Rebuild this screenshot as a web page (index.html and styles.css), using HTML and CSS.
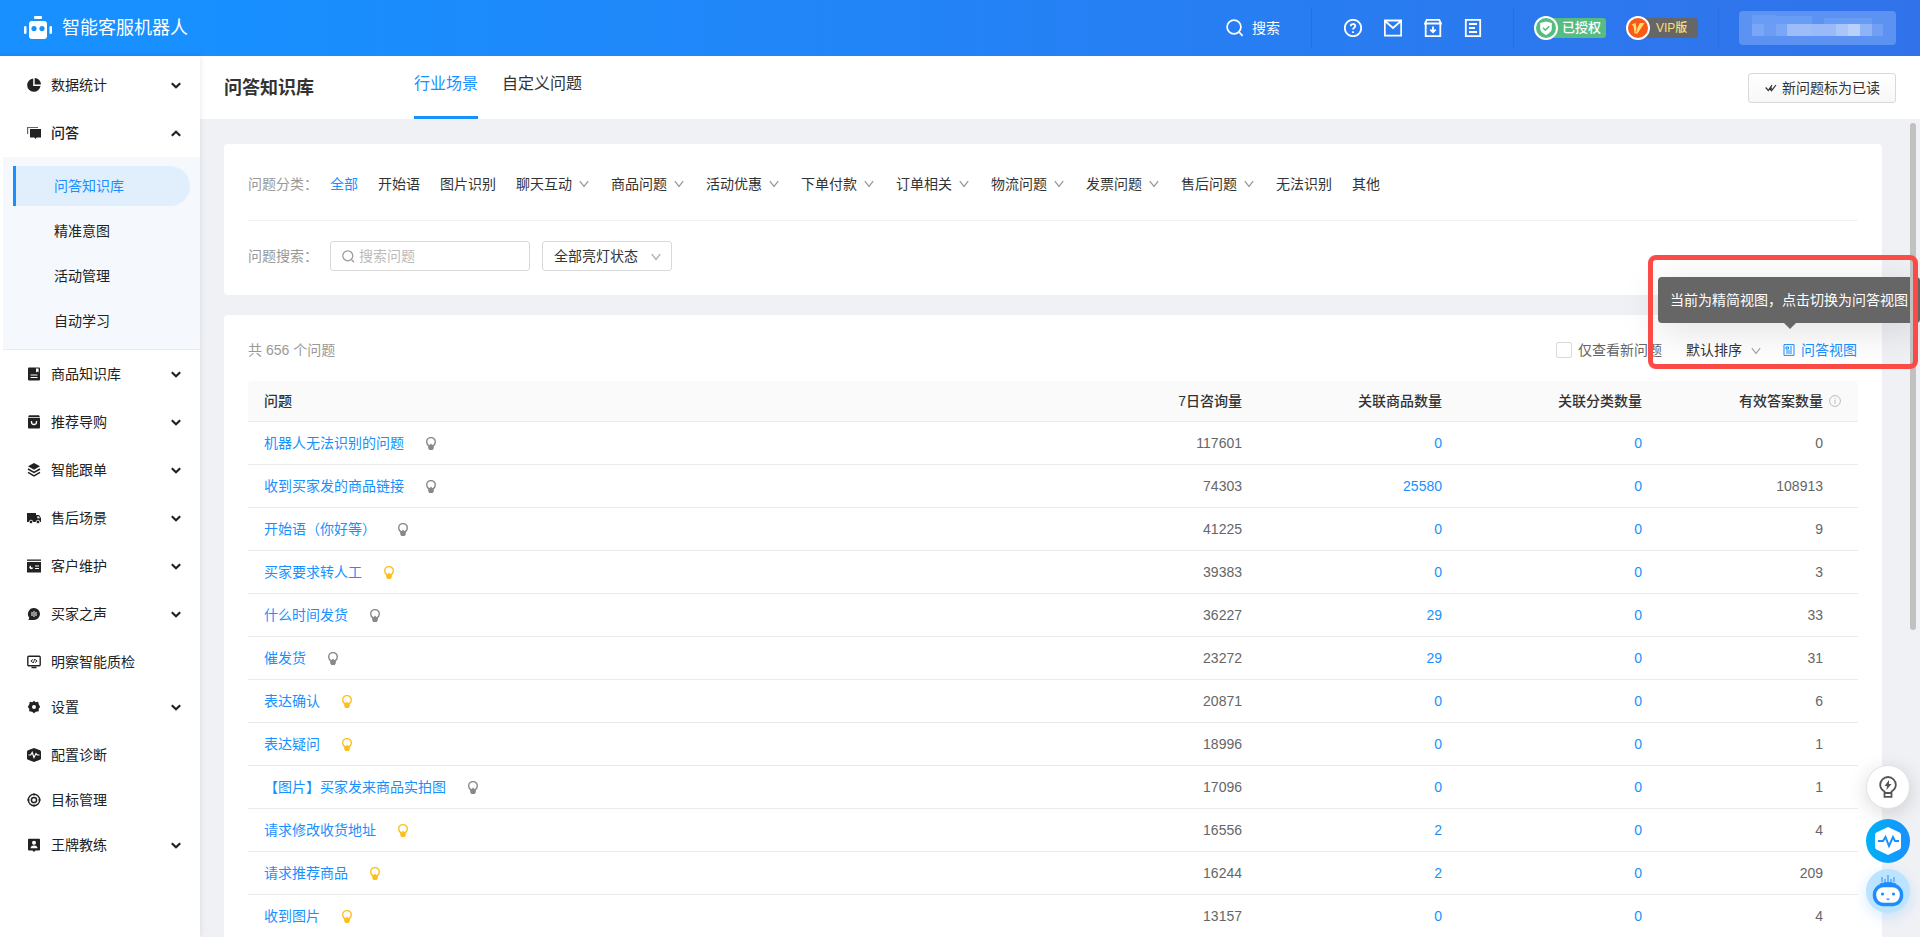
FILE: index.html
```html
<!DOCTYPE html>
<html lang="zh-CN">
<head>
<meta charset="utf-8">
<title>问答知识库</title>
<link rel="stylesheet" href="styles.css">
</head>
<body>
<svg class="sprite" aria-hidden="true">
  <symbol id="caret" viewBox="0 0 10 7"><path d="M0.8 1.2 5 5.2 9.2 1.2" fill="none" stroke="currentColor" stroke-width="2.2"/></symbol>
  <symbol id="down" viewBox="0 0 10 8"><path d="M0.8 1.2 5 6.4 9.2 1.2" fill="none" stroke="currentColor" stroke-width="1.3"/></symbol>
  <symbol id="search" viewBox="0 0 18 18"><circle cx="8" cy="8" r="6.9" fill="none" stroke="currentColor" stroke-width="1.7"/><path d="m13 13 3.6 3.9" stroke="currentColor" stroke-width="1.8"/></symbol>
  <symbol id="bulb" viewBox="0 0 10 13"><path d="M3.100 8.800C1.500 7.800.7 6.500.7 4.900a4.300 4.300 0 0 1 8.600 0c0 1.600-.8 2.900-2.400 3.900" fill="none" stroke="currentColor" stroke-width="1.400"/><path d="M2.200 8h1.600L5 6.400 6.200 8h1.600v3.200L6.700 13H3.300l-1.100-1.800z" fill="currentColor"/></symbol>
</svg>

<header class="topbar">
  <a class="brand" href="#">
    <svg width="28" height="24" viewBox="0 0 28 24"><g fill="#fff"><rect x="10" y="0" width="8" height="3" rx="1"/><rect x="5" y="5" width="18" height="18" rx="3"/><rect x="0" y="10" width="2.500" height="8" rx="1.200"/><rect x="25.500" y="10" width="2.500" height="8" rx="1.200"/></g><circle cx="10" cy="12.600" r="2.600" fill="#1890ff"/><circle cx="18" cy="12.600" r="2.600" fill="#1890ff"/></svg>
    <span>智能客服机器人</span>
  </a>
  <button class="top-search" type="button"><svg width="18" height="18"><use href="#search"/></svg>搜索</button>
  <i class="sep"></i>
  <nav class="top-icons">
    <a href="#" aria-label="帮助"><svg viewBox="0 0 18 18"><circle cx="9" cy="9" r="8.200"/><path d="M6.700 7.300c0-3 4.600-3 4.600-.2 0 1.700-2.300 1.700-2.300 3.400M9 12.200v1.700"/></svg></a>
    <a href="#" aria-label="邮件"><svg viewBox="0 0 18 18"><path d="M.8 1.500h16.400v15.200H.8zM1 2l8 7 8-7"/></svg></a>
    <a href="#" aria-label="下载"><svg viewBox="0 0 18 18"><path d="M2.800.8h12.400L17 4.500H1zM1.700 4.500v12.700h14.600V4.500M9 7.500v5.500M6.300 10.700 9 13.300l2.700-2.600"/></svg></a>
    <a href="#" aria-label="文档"><svg viewBox="0 0 18 18"><path d="M1.800.8h14.400v16.400H1.800zM5 5h8M5 9h6M5 13h8"/></svg></a>
  </nav>
  <i class="sep"></i>
  <a class="badge badge-green" href="#"><svg width="24" height="24" viewBox="0 0 24 24"><circle cx="12" cy="12" r="11" fill="#55bd82" stroke="#fff" stroke-width="2"/><path d="M12 5.500 17.800 7v5.500c0 3-2.800 5-5.800 6.500-3-1.500-5.800-3.500-5.800-6.500V7z" fill="#fff"/><path d="m9 11.800 2.300 2.300 4-3.900" fill="none" stroke="#55bd82" stroke-width="1.500"/></svg><span>已授权</span></a>
  <a class="badge badge-vip" href="#"><svg width="24" height="24" viewBox="0 0 24 24"><circle cx="12" cy="12" r="11" fill="#fb5a16" stroke="#fff" stroke-width="2"/><path d="m5.500 8.500 4-1.500 1.200 6L14 7h4.500l-7 10.500H8.500L7.500 10z" fill="#ffdc73"/><path d="m11.800 9.500-2 7" stroke="#fb5a16" stroke-width=".8"/></svg><span>VIP版</span></a>
  <i class="sep"></i>
  <div class="user">
    <svg viewBox="0 0 157 34" preserveAspectRatio="none"><rect width="157" height="34" rx="4" fill="#5c93f3"/><g fill="#699cf4"><rect x="13" y="4" width="24" height="9"/><rect x="37" y="5" width="36" height="8"/><rect x="85" y="7" width="48" height="6"/></g><rect x="13" y="13" width="131" height="12" fill="#8eb3f6"/><rect x="13" y="13" width="12" height="12" fill="#7ba6f6"/><rect x="25" y="13" width="12" height="12" fill="#6c9cf4"/><rect x="37" y="13" width="11" height="12" fill="#7ba6f6"/><rect x="48" y="13" width="24" height="12" fill="#9dbcf8"/><rect x="72" y="13" width="25" height="12" fill="#9ab9f8"/><rect x="97" y="13" width="12" height="12" fill="#aac6f9"/><rect x="109" y="13" width="12" height="12" fill="#b9d0fa"/><rect x="133" y="13" width="11" height="12" fill="#719ff4"/></svg>
  </div>
</header>

<div class="layout">
  <aside class="sidebar">
    <ul class="menu">
      <li><a href="#"><svg class="mi" viewBox="0 0 14 14"><path d="M6.200.5A6.700 6.700 0 1 0 13.500 8H6.200z"/><path d="M7.700 0A6.500 6.500 0 0 1 14 6.500H7.700z"/></svg>数据统计<svg class="car"><use href="#caret"/></svg></a></li>
      <li class="open"><a href="#"><svg class="mi" viewBox="0 0 14 14"><path d="M0 1h11v1H1.200v6H0z" opacity=".7"/><path d="M3 3h11v8.500H9.700L8.500 13l-1.200-1.500H3z"/></svg>问答<svg class="car up"><use href="#caret"/></svg></a>
        <ul class="sub">
          <li><a class="on" href="#">问答知识库</a></li>
          <li><a href="#">精准意图</a></li>
          <li><a href="#">活动管理</a></li>
          <li><a href="#">自动学习</a></li>
        </ul>
      </li>
      <li><a href="#"><svg class="mi" viewBox="0 0 14 14"><path fill-rule="evenodd" d="M2 .5h10q1 0 1 1v11q0 1-1 1H2q-1 0-1-1v-11q0-1 1-1zM9 1.500v4l1.300-1 1.300 1v-4zM3.500 7.500v1h7v-1zM3.500 10v1h7v-1z"/></svg>商品知识库<svg class="car"><use href="#caret"/></svg></a></li>
      <li><a href="#"><svg class="mi" viewBox="0 0 14 14"><path d="M2 .3h10l1 2H1z"/><path d="M1 3h12v9.500q0 1-1 1H2q-1 0-1-1z"/><path d="M4.500 6v1a2.500 2.500 0 0 0 5 0V6" fill="none" stroke="#fff" stroke-width="1.300"/></svg>推荐导购<svg class="car"><use href="#caret"/></svg></a></li>
      <li><a href="#"><svg class="mi" viewBox="0 0 14 14"><path d="m7 0 6 3.300-6 3.500-6-3.500z"/><path d="m1 6 6 3.300L13 6M1 9.300l6 3.500 6-3.500" fill="none" stroke="currentColor" stroke-width="1.500"/></svg>智能跟单<svg class="car"><use href="#caret"/></svg></a></li>
      <li><a href="#"><svg class="mi" viewBox="0 0 14 14"><path d="M0 2h9v2h3l2 3v4H0z"/><path d="M10.300 5.200h1.300L13 7.300h-2.700z" fill="#fff"/><circle cx="4" cy="11" r="1.800" stroke="#fff" stroke-width=".8"/><circle cx="11" cy="11" r="1.800" stroke="#fff" stroke-width=".8"/></svg>售后场景<svg class="car"><use href="#caret"/></svg></a></li>
      <li><a href="#"><svg class="mi" viewBox="0 0 14 14"><path d="M0 .5h14v1.300H0z"/><path d="M0 3h14v10.500H0z"/><circle cx="4.300" cy="8.300" r="1.900" fill="#fff"/><path d="M4.500 5.500v2.600h3" stroke="currentColor"/><path d="M8 7h4M8 9.500h4" stroke="#fff" stroke-width="1.200"/></svg>客户维护<svg class="car"><use href="#caret"/></svg></a></li>
      <li><a href="#"><svg class="mi" viewBox="0 0 14 14"><path d="M7 1a6 6 0 1 1 0 12H1.500l.8-2.200A6 6 0 0 1 7 1z"/><path d="M5 5v4M7 4v6M9 5v4" stroke="#fff"/></svg>买家之声<svg class="car"><use href="#caret"/></svg></a></li>
      <li class="tight"><a href="#"><svg class="mi" viewBox="0 0 14 14"><rect x=".8" y="1.200" width="12.400" height="9.600" rx="1" fill="none" stroke="currentColor" stroke-width="1.400"/><path d="M4.500 12.500h5" stroke="currentColor" stroke-width="1.500"/><path d="M6 4.300 3.900 6 6 7.700M8 4.300 10.100 6 8 7.700M7.700 4 6.300 8" fill="none" stroke="currentColor" stroke-width=".9"/></svg>明察智能质检</a></li>
      <li><a href="#"><svg class="mi" viewBox="0 0 14 14"><path fill-rule="evenodd" d="m7 .8 1.700 1.500 2.500-.5.500 2.500L13.200 7l-1.500 1.700.1 2.500-2.900.5L7 13.200l-1.900-1.500-2.900-.5.100-2.500L.8 7l1.500-2.700.5-2.500 2.500.5zM7 5a2 2 0 1 0 0 4 2 2 0 0 0 0-4z"/></svg>设置<svg class="car"><use href="#caret"/></svg></a></li>
      <li class="tight"><a href="#"><svg class="mi" viewBox="0 0 14 14"><path d="m7 0 6 2.300q1 .5 1 1.500v6.400q0 1-1 1.500L7 14l-6-2.300q-1-.5-1-1.500V3.800q0-1 1-1.500z"/><path d="M1.500 7h2.200l1.500-2.500L7 9.500l2-4L10.300 7h2.200" fill="none" stroke="#fff" stroke-width="1.200"/></svg>配置诊断</a></li>
      <li class="tight"><a href="#"><svg class="mi" viewBox="0 0 14 14"><g fill="none" stroke="currentColor"><circle cx="7" cy="7" r="5.700" stroke-width="1.400"/><circle cx="7" cy="7" r="2.600" stroke-width="1.500"/><path d="M7 0v3M7 11v3M0 7h3M11 7h3" stroke-width=".8"/></g></svg>目标管理</a></li>
      <li><a href="#"><svg class="mi" viewBox="0 0 14 14"><path d="M2 .8h10q1 0 1 1v9.700q0 1-1 1H8.500L7 14l-1.500-1.500H2q-1 0-1-1V1.800q0-1 1-1z"/><circle cx="7" cy="4.800" r="2" fill="#fff"/><path d="M3.500 10.300q0-2.500 3.500-2.800 3.500.3 3.500 2.800z" fill="#fff"/></svg>王牌教练<svg class="car"><use href="#caret"/></svg></a></li>
    </ul>
  </aside>

  <main class="main">
    <div class="pagehead">
      <h1>问答知识库</h1>
      <nav class="tabs"><a class="on" href="#">行业场景</a><a href="#">自定义问题</a></nav>
      <button class="mark" type="button"><svg width="12" height="8" viewBox="0 0 12 8"><path d="m.7 3.500 2.600 3L7 1.200M4.700 4.500l1.800 2.200L11 1M6.700 3.700l-.8 1.100" fill="none" stroke="currentColor" stroke-width="1.200"/></svg>新问题标为已读</button>
    </div>

    <div class="content">
      <section class="card">
        <div class="filters">
          <span class="label">问题分类：</span>
          <a class="on" href="#">全部</a>
          <a href="#">开始语</a>
          <a href="#">图片识别</a>
          <a href="#">聊天互动<svg><use href="#down"/></svg></a>
          <a href="#">商品问题<svg><use href="#down"/></svg></a>
          <a href="#">活动优惠<svg><use href="#down"/></svg></a>
          <a href="#">下单付款<svg><use href="#down"/></svg></a>
          <a href="#">订单相关<svg><use href="#down"/></svg></a>
          <a href="#">物流问题<svg><use href="#down"/></svg></a>
          <a href="#">发票问题<svg><use href="#down"/></svg></a>
          <a href="#">售后问题<svg><use href="#down"/></svg></a>
          <a href="#">无法识别</a>
          <a href="#">其他</a>
        </div>
        <div class="searchrow">
          <label class="label" for="q">问题搜索：</label>
          <div class="field"><svg width="13" height="13"><use href="#search"/></svg><input id="q" type="text" placeholder="搜索问题"></div>
          <div class="pick"><select aria-label="亮灯状态"><option>全部亮灯状态</option></select><svg><use href="#down"/></svg></div>
        </div>
      </section>

      <section class="card">
        <div class="toolbar">
          <span class="count">共 656 个问题</span>
          <label class="check"><input type="checkbox">仅查看新问题</label>
          <div class="pick plain"><select aria-label="排序"><option>默认排序</option></select><svg><use href="#down"/></svg></div>
          <div class="viewwrap">
            <button class="view" type="button"><svg width="12" height="12" viewBox="0 0 12 12"><path d="M1 .6h10v10.800H1zM3 3h2.500v2H3zM7 3h2M7 5h2M3 7h6M3 9h6" fill="none" stroke="currentColor"/></svg>问答视图</button>
            <div class="tip" role="tooltip">当前为精简视图，点击切换为问答视图</div>
            <div class="callout"></div>
          </div>
        </div>
        <table class="grid">
          <thead><tr><th>问题</th><th>7日咨询量</th><th>关联商品数量</th><th>关联分类数量</th><th>有效答案数量<svg class="info" viewBox="0 0 12 12"><circle cx="6" cy="6" r="5.400"/><path d="M6 5v4M6 3v1.200"/></svg></th></tr></thead>
          <tbody>
            <tr><td><a href="#">机器人无法识别的问题</a><svg class="lamp"><use href="#bulb"/></svg></td><td>117601</td><td><a href="#">0</a></td><td><a href="#">0</a></td><td>0</td></tr>
            <tr><td><a href="#">收到买家发的商品链接</a><svg class="lamp"><use href="#bulb"/></svg></td><td>74303</td><td><a href="#">25580</a></td><td><a href="#">0</a></td><td>108913</td></tr>
            <tr><td><a href="#">开始语（你好等）</a><svg class="lamp"><use href="#bulb"/></svg></td><td>41225</td><td><a href="#">0</a></td><td><a href="#">0</a></td><td>9</td></tr>
            <tr><td><a href="#">买家要求转人工</a><svg class="lamp lit"><use href="#bulb"/></svg></td><td>39383</td><td><a href="#">0</a></td><td><a href="#">0</a></td><td>3</td></tr>
            <tr><td><a href="#">什么时间发货</a><svg class="lamp"><use href="#bulb"/></svg></td><td>36227</td><td><a href="#">29</a></td><td><a href="#">0</a></td><td>33</td></tr>
            <tr><td><a href="#">催发货</a><svg class="lamp"><use href="#bulb"/></svg></td><td>23272</td><td><a href="#">29</a></td><td><a href="#">0</a></td><td>31</td></tr>
            <tr><td><a href="#">表达确认</a><svg class="lamp lit"><use href="#bulb"/></svg></td><td>20871</td><td><a href="#">0</a></td><td><a href="#">0</a></td><td>6</td></tr>
            <tr><td><a href="#">表达疑问</a><svg class="lamp lit"><use href="#bulb"/></svg></td><td>18996</td><td><a href="#">0</a></td><td><a href="#">0</a></td><td>1</td></tr>
            <tr><td><a href="#">【图片】买家发来商品实拍图</a><svg class="lamp"><use href="#bulb"/></svg></td><td>17096</td><td><a href="#">0</a></td><td><a href="#">0</a></td><td>1</td></tr>
            <tr><td><a href="#">请求修改收货地址</a><svg class="lamp lit"><use href="#bulb"/></svg></td><td>16556</td><td><a href="#">2</a></td><td><a href="#">0</a></td><td>4</td></tr>
            <tr><td><a href="#">请求推荐商品</a><svg class="lamp lit"><use href="#bulb"/></svg></td><td>16244</td><td><a href="#">2</a></td><td><a href="#">0</a></td><td>209</td></tr>
            <tr><td><a href="#">收到图片</a><svg class="lamp lit"><use href="#bulb"/></svg></td><td>13157</td><td><a href="#">0</a></td><td><a href="#">0</a></td><td>4</td></tr>
          </tbody>
        </table>
      </section>
      <i class="scrollbar"></i>
    </div>
  </main>
</div>

<div class="floats">
  <button class="fl fl-white" type="button" aria-label="提示"><svg width="18" height="22" viewBox="0 0 18 22"><path d="M5.500 15.500C3 14 1.200 11.700 1.200 8.800a7.800 7.800 0 0 1 15.600 0c0 2.900-1.800 5.200-4.300 6.700v5.400h-7zM5.500 17h7" fill="none" stroke="#555" stroke-width="1.800"/><path d="m10 4-4.500 6H8l-.5 4 5-6H10z" fill="#555"/></svg></button>
  <button class="fl fl-blue" type="button" aria-label="诊断"><svg width="28" height="28" viewBox="0 0 28 28"><path d="M14 0 25.500 5.500q1.500.8 1.500 2.500v12q0 1.700-1.500 2.500L14 28 2.500 22.500Q1 21.700 1 20V8q0-1.700 1.500-2.500z" fill="#fff"/><path d="M4 14h5l2.500-4 3.500 9 4-9 2 4h4" fill="none" stroke="#1890ff" stroke-width="2"/></svg></button>
  <button class="fl fl-sky" type="button" aria-label="机器人"><svg width="32" height="32" viewBox="0 0 32 32"><path d="M10 2v5M13 4v4M16 0v9M19 4v4M22 2v5" stroke="#3b9bff" stroke-width="1.200"/><rect x="2.500" y="10.500" width="27" height="19" rx="9" fill="#fff" stroke="#1f8dff" stroke-width="3.500"/><path d="M8 9.500q8-3 16 0" fill="none" stroke="#1f8dff" stroke-width="2"/><circle cx="10.500" cy="19" r="1.600" fill="#1f8dff"/><circle cx="21.500" cy="19" r="1.600" fill="#1f8dff"/><path d="M14 23.500h4l-2 2z" fill="#1f8dff"/></svg></button>
</div>
</body>
</html>
```
FILE: styles.css
```css
* { box-sizing: border-box; }
body {
  margin: 0;
  height: 100vh;
  overflow: hidden;
  display: flex;
  flex-direction: column;
  background: #f0f1f5;
  color: #333;
  font: 14px/22px "Liberation Sans", "Noto Sans CJK SC", sans-serif;
}
a { color: inherit; text-decoration: none; }
button, input, select { font: inherit; color: inherit; margin: 0; padding: 0; border: 0; background: none; }
ul { list-style: none; margin: 0; padding: 0; }
svg { display: block; flex: none; }
.sprite { position: absolute; width: 0; height: 0; }

/* top bar */
.topbar {
  flex: none;
  height: 56px;
  padding: 0 24px;
  display: flex;
  align-items: center;
  color: #fff;
  background: linear-gradient(90deg, #1890ff 0%, #1890ff 10%, #3172ea 100%);
}
.brand { display: flex; align-items: center; gap: 10px; margin-right: auto; font-size: 18px; }
.top-search { display: flex; align-items: center; gap: 8px; margin-right: 31px; }
.sep { width: 1px; height: 40px; background: #2b6edd; }
.top-icons { display: flex; gap: 22px; margin: 0 31px 0 32px; }
.top-icons svg { width: 18px; height: 18px; fill: none; stroke: #fff; stroke-width: 1.8; }
.badge { display: flex; align-items: center; width: 72px; margin-left: 20px; font-size: 13px; font-weight: 500; }
.badge svg { position: relative; }
.badge span { flex: 1; height: 20px; line-height: 20px; margin-left: -10px; padding-left: 14px; border-radius: 3px; white-space: nowrap; }
.badge-green span { background: #55bd82; }
.badge-vip span { background: #666; color: #ffdc73; padding-left: 16px; font-size: 12px; }
.badge-vip + .sep { margin-left: 20px; }
.user { width: 157px; height: 34px; margin-left: 20px; }
.user svg { width: 100%; height: 100%; }

.layout { flex: 1; min-height: 0; display: flex; }

/* side menu */
.sidebar { flex: none; width: 200px; padding-top: 5px; background: #fff; box-shadow: 0 0 6px rgba(0, 0, 0, .1); z-index: 1; color: #222; }
.menu > li { padding: 4px 0; }
.menu > li > a { display: flex; align-items: center; height: 40px; padding: 0 19px 0 27px; }
.menu > li.tight { padding-bottom: 1px; }
.menu > li.open { padding-bottom: 0; }
.open > a { font-weight: 500; }
.mi { width: 14px; height: 14px; margin-right: 10px; fill: currentColor; }
.car { width: 10px; height: 7px; margin-left: auto; }
.car.up { transform: scaleY(-1); }
.sub { margin: 4px 0 0 3px; padding: 9px 10px 3px; background: #f5f9fd; border-bottom: 1px solid #e4eef8; }
.sub li { margin-bottom: 5px; }
.sub a { display: block; height: 40px; line-height: 40px; padding-left: 38px; border-left: 3px solid transparent; border-radius: 0 20px 20px 0; }
.sub .on { color: #1890ff; background: #e1effd; border-color: #1890ff; }

/* page head */
.main { flex: 1; min-width: 0; display: flex; flex-direction: column; }
.pagehead { flex: none; height: 63px; padding: 0 24px; display: flex; align-items: center; background: #fff; }
h1 { margin: 0 100px 0 0; font-size: 18px; line-height: 26px; font-weight: 700; }
.tabs { display: flex; gap: 24px; align-self: stretch; font-size: 16px; }
.tabs a { line-height: 56px; border-bottom: 3px solid transparent; }
.tabs .on { color: #1890ff; border-color: #1890ff; }
.mark {
  margin-left: auto;
  height: 30px;
  padding: 0 15px 0 16px;
  display: flex;
  align-items: center;
  gap: 5px;
  border: 1px solid #d9d9d9;
  border-radius: 3px;
  background: linear-gradient(#fff, #f7f7f7);
}

/* content */
.content { position: relative; flex: 1; min-height: 0; overflow: hidden; padding: 25px 38px 0 24px; }
.scrollbar { position: absolute; right: 4px; top: 4px; width: 6px; height: 62%; border-radius: 3px; background: #c1c1c1; }
.card { padding: 24px; margin-bottom: 20px; border-radius: 4px; background: #fff; }
.label { width: 82px; color: #999; }
.filters { display: flex; align-items: center; min-height: 32px; }
.filters a { display: flex; align-items: center; gap: 7px; margin-right: 20px; white-space: nowrap; }
.filters a svg { width: 10px; height: 8px; margin-right: 2px; color: #999; }
.filters .on { color: #1890ff; }
.searchrow { display: flex; align-items: center; margin-top: 20px; padding-top: 20px; border-top: 1px solid #f2f2f2; }
.field { display: flex; align-items: center; gap: 4px; width: 200px; height: 30px; padding: 0 11px; border: 1px solid #d9d9d9; border-radius: 3px; color: #999; }
.field input { flex: 1; min-width: 0; height: 28px; outline: 0; color: #333; }
.field input::placeholder { color: #bbb; }
.pick { position: relative; margin-left: 12px; }
.pick select { appearance: none; width: 130px; height: 30px; padding: 0 11px; border: 1px solid #d9d9d9; border-radius: 3px; }
.pick svg { position: absolute; right: 11px; top: 50%; width: 10px; height: 8px; margin-top: -3px; color: #aaa; pointer-events: none; }
.pick.plain { margin: 0 22px 0 24px; }
.pick.plain select { width: 75px; height: 22px; padding: 0; border: 0; }
.pick.plain svg { right: 0; }

.toolbar { display: flex; align-items: center; height: 22px; margin-bottom: 20px; padding-right: 1px; }
.count { margin-right: auto; color: #999; }
.check { display: flex; align-items: center; gap: 6px; color: #666; }
.check input { appearance: none; width: 16px; height: 16px; border: 1px solid #d9d9d9; border-radius: 2px; background: #fff; }
.viewwrap { position: relative; }
.view { display: flex; align-items: center; gap: 6px; height: 22px; color: #1890ff; white-space: nowrap; }
.tip {
  position: absolute;
  left: -125px;
  bottom: 38px;
  padding: 12px;
  border-radius: 4px;
  background: #666;
  color: #fff;
  white-space: nowrap;
  box-shadow: 0 8px 40px rgba(0, 0, 0, .12);
}
.tip::after { content: ""; position: absolute; left: 126px; top: 100%; border: 6px solid transparent; border-top-color: #666; border-bottom: 0; }
.callout { position: absolute; left: -135px; top: -84px; width: 270px; height: 114px; border: 5px solid #fa4b47; border-radius: 8px; pointer-events: none; z-index: 2; }

/* table */
.grid { width: 100%; border-collapse: separate; border-spacing: 0; table-layout: fixed; }
.grid th, .grid td { padding: 0 16px; width: 200px; text-align: right; border-bottom: 1px solid #ebebeb; }
.grid th { height: 41px; background: #fafafa; font-weight: 500; white-space: nowrap; }
.grid td { height: 43px; color: #666; }
.grid th:first-child, .grid td:first-child { width: auto; text-align: left; }
.grid th:first-child { border-top-left-radius: 4px; }
.grid th:last-child { border-top-right-radius: 4px; padding-right: 17px; }
.grid td:last-child { padding-right: 35px; }
.grid a { color: #1890ff; }
.info { display: inline-block; width: 12px; height: 12px; margin-left: 6px; vertical-align: -1px; fill: none; stroke: #bbb; }
.lamp { display: inline-block; width: 10px; height: 13px; margin-left: 22px; vertical-align: -2px; color: #888; }
.lamp.lit { color: #fbc020; }

/* floating buttons */
.floats { position: fixed; right: 10px; bottom: 24px; display: grid; justify-items: center; gap: 6px; z-index: 3; }
.fl { width: 44px; height: 44px; border-radius: 50%; display: grid; place-items: center; }
.fl-white { margin-bottom: 4px; background: #fff; border: 1px solid #e2e2e2; box-shadow: 0 4px 20px rgba(0, 0, 0, .15); }
.fl-blue { background: linear-gradient(90deg, #00b2f5, #1890ff); }
.fl-sky { background: #bae4ff; box-shadow: 0 4px 14px rgba(24, 144, 255, .18); }
```
